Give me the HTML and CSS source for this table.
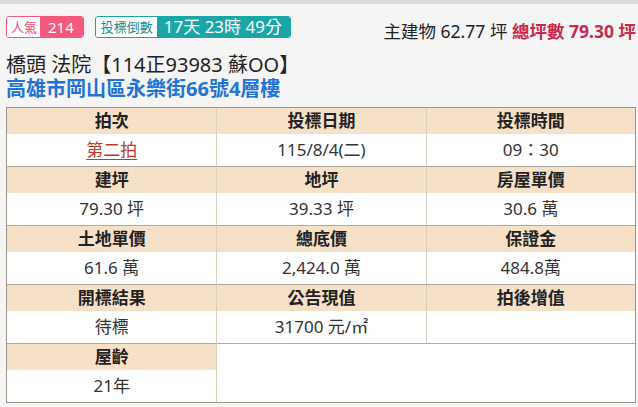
FILE: index.html
```html
<!DOCTYPE html>
<html lang="zh-Hant">
<head>
<meta charset="utf-8">
<link rel="stylesheet" href="styles.css">
</head>
<body>
<div class="topbar"></div>
<div class="page">
  <div class="head">
    <div class="badges">
      <span class="badge badge-pink"><span class="b-label">人氣</span><span class="b-value">214</span></span>
      <span class="badge badge-teal"><span class="b-label">投標倒數</span><span class="b-value">17天 23時 49分</span></span>
    </div>
    <div class="area">主建物 62.77 坪 <span class="total">總坪數 79.30 坪</span></div>
  </div>
  <div class="title">橋頭 法院【114正93983 蘇OO】</div>
  <div class="addr">高雄市岡山區永樂街66號4層樓</div>
  <div class="grid">
    <div class="cell"><div class="th">拍次</div><div class="td"><a class="link">第二拍</a></div></div>
    <div class="cell"><div class="th">投標日期</div><div class="td">115/8/4(二)</div></div>
    <div class="cell"><div class="th">投標時間</div><div class="td">09：30</div></div>
    <div class="cell"><div class="th">建坪</div><div class="td">79.30 坪</div></div>
    <div class="cell"><div class="th">地坪</div><div class="td">39.33 坪</div></div>
    <div class="cell"><div class="th">房屋單價</div><div class="td">30.6 萬</div></div>
    <div class="cell"><div class="th">土地單價</div><div class="td">61.6 萬</div></div>
    <div class="cell"><div class="th">總底價</div><div class="td">2,424.0 萬</div></div>
    <div class="cell"><div class="th">保證金</div><div class="td">484.8萬</div></div>
    <div class="cell"><div class="th">開標結果</div><div class="td">待標</div></div>
    <div class="cell"><div class="th">公告現值</div><div class="td">31700 元/㎡</div></div>
    <div class="cell"><div class="th">拍後增值</div><div class="td"></div></div>
    <div class="cell last"><div class="th">屋齡</div><div class="td">21年</div></div>
    <div class="cell last empty"></div>
  </div>
</div>
</body>
</html>
```

FILE: styles.css
```css
* { box-sizing: border-box; }
html, body { margin: 0; padding: 0; }
body {
  background: #f5f5f5;
  font-family: "Noto Sans", "Noto Sans CJK TC", sans-serif;
  color: #222;
  width: 638px;
  height: 407px;
  overflow: hidden;
}
.topbar { height: 4px; background: #dcdcdc; }
.page { padding: 0 2px 0 6px; }
.head {
  display: flex;
  justify-content: space-between;
  align-items: center;
  margin-top: 12px;
  height: 22px;
}
.badges { display: flex; gap: 11px; }
.badge {
  display: flex;
  flex-shrink: 0;
  white-space: nowrap;
  height: 22px;
  border-radius: 3px;
  overflow: hidden;
  border: 1px solid;
}
.b-label {
  background: #fff;
  font-size: 13px;
  line-height: 20px;
  padding: 0 4px;
}
.b-value {
  color: #fff;
  line-height: 20px;
}
.badge-pink { border-color: #f05a7c; }
.badge-pink .b-label { color: #e8486c; padding: 0 3px 0 4px; }
.badge-pink .b-value { background: #f4597d; font-size: 15px; padding: 0 9px 0 8px; }
.badge-teal { border-color: #1aa6a6; }
.badge-teal .b-label { color: #168c8c; padding: 0 4px 0 5px; }
.badge-teal .b-value { background: #1aa6a6; font-size: 17px; padding: 0 8px 0 7px; }
.area { font-size: 17.5px; color: #222; padding-top: 6px; white-space: nowrap; }
.total { color: #c8294a; font-weight: bold; }
.title {
  margin-top: 15px;
  font-size: 20px;
  line-height: 24px;
  color: #222;
}
.addr {
  font-size: 20px;
  line-height: 24px;
  font-weight: bold;
  color: #1f74d4;
}
.grid {
  margin-top: 6px;
  display: grid;
  grid-template-columns: repeat(3, 1fr);
  border: 1px solid #9b9585;
  background: #fff;
  width: 630px;
}
.cell {
  border-bottom: 1px solid #b0aa9c;
  border-left: 1px solid #d9cfbe;
}
.cell:nth-child(3n+1) { border-left: none; }
.cell.last { border-bottom: none; }
.empty { grid-column: span 2; }
.th {
  height: 26px;
  line-height: 26px;
  background: #f6e0c7;
  text-align: center;
  font-weight: bold;
  font-size: 17px;
  color: #222;
}
.td {
  height: 32px;
  line-height: 32px;
  text-align: center;
  font-size: 17px;
  color: #333;
}
.link { color: #c0392b; text-decoration: underline; text-underline-offset: 3px; }
```
